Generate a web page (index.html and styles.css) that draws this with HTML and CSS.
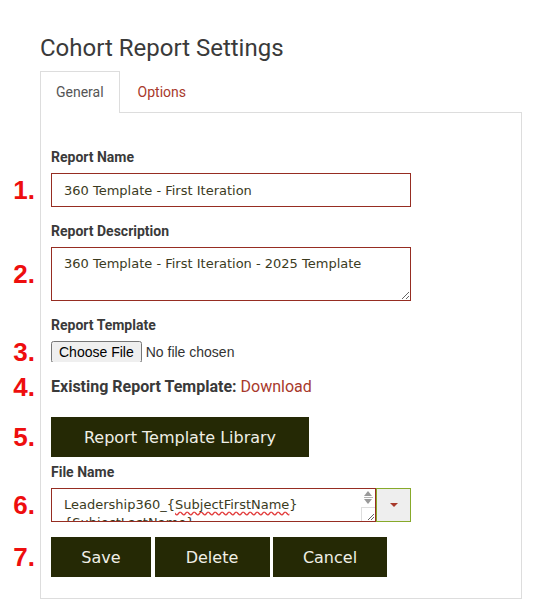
FILE: index.html
```html
<!DOCTYPE html>
<html lang="en">
<head>
<meta charset="utf-8">
<title>Cohort Report Settings</title>
<link rel="stylesheet" href="styles.css">
</head>
<body>
<div class="page">
  <h1 class="title">Cohort Report Settings</h1>
  <ul class="tabs">
    <li class="tab active">General</li>
    <li class="tab"><a class="tab-link" href="#">Options</a></li>
  </ul>
  <div class="panel">
    <div class="field">
      <label class="label">Report Name</label>
      <div class="ctrl">
        <span class="num">1.</span>
        <input class="input" type="text" value="360 Template - First Iteration">
      </div>
    </div>
    <div class="field">
      <label class="label">Report Description</label>
      <div class="ctrl">
        <span class="num">2.</span>
        <textarea class="input textarea">360 Template - First Iteration - 2025 Template</textarea>
      </div>
    </div>
    <div class="field field-file">
      <label class="label">Report Template</label>
      <div class="ctrl">
        <span class="num">3.</span>
        <input class="file" type="file">
      </div>
    </div>
    <div class="field field-existing">
      <div class="ctrl existing">
        <span class="num">4.</span>
        <span class="existing-label">Existing Report Template:</span> <a class="link" href="#">Download</a>
      </div>
    </div>
    <div class="field field-library">
      <div class="ctrl">
        <span class="num">5.</span>
        <button class="btn btn-library" type="button">Report Template Library</button>
      </div>
    </div>
    <div class="field">
      <label class="label">File Name</label>
      <div class="ctrl fname">
        <span class="num">6.</span>
        <div class="fname-box">
          <div class="fname-text">Leadership360_{<span class="spell">SubjectFirstName</span>}<br>{SubjectLastName}</div>
          <div class="fake-scroll">
            <span class="arr arr-up"></span>
            <span class="arr-sep"></span>
            <span class="arr arr-down"></span>
            <span class="grip">
              <svg width="10" height="10" viewBox="0 0 10 10"><path d="M9 3 L3 9 M9 6 L6 9" stroke="#666" stroke-width="1"/></svg>
            </span>
          </div>
        </div>
        <button class="fname-btn" type="button"><span class="caret"></span></button>
      </div>
    </div>
    <div class="field field-actions">
      <div class="ctrl actions">
        <span class="num">7.</span>
        <button class="btn btn-save" type="button">Save</button>
        <button class="btn btn-delete" type="button">Delete</button>
        <button class="btn btn-cancel" type="button">Cancel</button>
      </div>
    </div>
  </div>
</div>
</body>
</html>
```

FILE: styles.css
```css
* { box-sizing: border-box; }
html, body { margin: 0; padding: 0; background: #fff; }
body { font-family: Roboto, "Liberation Sans", sans-serif; color: #333; }

.page { padding: 34px 0 0 40px; width: 521px; }

.title {
  margin: 0 0 9px;
  font-size: 24px;
  line-height: 28px;
  font-weight: 400;
  color: #3a3a3a;
}

.tabs {
  list-style: none;
  margin: 0;
  padding: 0;
  display: flex;
  position: relative;
  z-index: 1;
}
.tab {
  padding: 10px 15px;
  font-size: 14px;
  line-height: 20px;
  color: #555;
  border: 1px solid transparent;
  border-bottom: 0;
  margin-right: 2px;
}
.tab.active {
  border-color: #ddd;
  background: #fff;
  padding-bottom: 11px;
  margin-bottom: -1px;
}
.tab-link { color: #a8392b; text-decoration: none; }

.panel {
  border: 1px solid #ddd;
  padding: 35px 10px 21px;
  width: 482px;
}

.field { margin-bottom: 15px; }
.field-file { margin-bottom: 16px; }
.field-existing { margin-bottom: 21px; }
.field-library { margin-bottom: 6px; }
.field-actions { margin-bottom: 0; }

.label {
  display: block;
  font-size: 14px;
  line-height: 18px;
  font-weight: 700;
  color: #3a3a3a;
  margin-bottom: 7px;
}

.ctrl { position: relative; }
.num {
  position: absolute;
  right: 100%;
  margin-right: 16px;
  top: 50%;
  transform: translateY(-50%);
  font-family: "Liberation Sans", Arial, sans-serif;
  font-weight: 700;
  font-size: 26px;
  line-height: 1;
  color: #ee0e0e;
}

.input {
  display: block;
  width: 360px;
  height: 34px;
  border: 1px solid #962d22;
  border-radius: 0;
  padding: 0 12px;
  font-family: "DejaVu Sans", "Liberation Sans", sans-serif;
  font-size: 13px;
  color: #3b3b1e;
  background: #fff;
  outline: none;
}
.textarea {
  height: 54px;
  padding: 7px 12px;
  line-height: 18px;
  resize: vertical;
}

.file {
  display: block;
  font-family: "Liberation Sans", Arial, sans-serif;
  font-size: 14px;
  color: #333;
  height: 21px;
}

.existing { font-size: 16px; line-height: 18px; }
.existing-label { font-weight: 700; color: #3a3a3a; }
.link { color: #a8392b; text-decoration: none; font-weight: 400; }

.btn {
  display: block;
  height: 40px;
  border: 0;
  border-radius: 0;
  background: #252905;
  color: #efefe6;
  font-family: "DejaVu Sans", "Liberation Sans", sans-serif;
  font-size: 16px;
  padding: 0;
  cursor: pointer;
}
.btn-library { width: 258px; }

.fname { display: flex; }
.fname-box {
  width: 325px;
  height: 34px;
  border: 1px solid #962d22;
  display: flex;
  overflow: hidden;
  background: #fff;
}
.fname-text {
  flex: 1;
  padding: 7px 12px 0;
  font-family: "DejaVu Sans", "Liberation Sans", sans-serif;
  font-size: 13px;
  line-height: 18px;
  color: #3b3b1e;
  overflow: hidden;
  white-space: nowrap;
}
.spell {
  text-decoration: underline wavy #e23b3b;
  text-decoration-skip-ink: none;
  text-underline-offset: 2px;
}
.fake-scroll {
  width: 14px;
  position: relative;
  display: flex;
  flex-direction: column;
  align-items: center;
  padding-top: 2px;
}
.arr {
  width: 0;
  height: 0;
  border-left: 4px solid transparent;
  border-right: 4px solid transparent;
}
.arr-up { border-bottom: 5px solid #9a9a9a; }
.arr-sep { width: 9px; height: 1px; background: #b5b5b5; margin: 1px 0; }
.arr-down { border-top: 5px solid #9a9a9a; }
.grip {
  position: absolute;
  bottom: 0;
  right: 0;
  width: 14px;
  height: 14px;
  border-left: 1px solid #ddd;
  border-top: 1px solid #ddd;
  background: #fff;
  display: flex;
  align-items: flex-end;
  justify-content: flex-end;
}
.grip svg { display: block; }

.fname-btn {
  width: 35px;
  height: 34px;
  border: 1px solid #87a92a;
  background: #eee;
  border-radius: 0;
  padding: 0;
  display: flex;
  align-items: center;
  justify-content: center;
}
.caret {
  width: 0;
  height: 0;
  border-left: 4px solid transparent;
  border-right: 4px solid transparent;
  border-top: 4px solid #a8392b;
}

.actions { display: flex; gap: 3.5px; }
.btn-save { width: 100px; }
.btn-delete { width: 115px; }
.btn-cancel { width: 114px; }
```
